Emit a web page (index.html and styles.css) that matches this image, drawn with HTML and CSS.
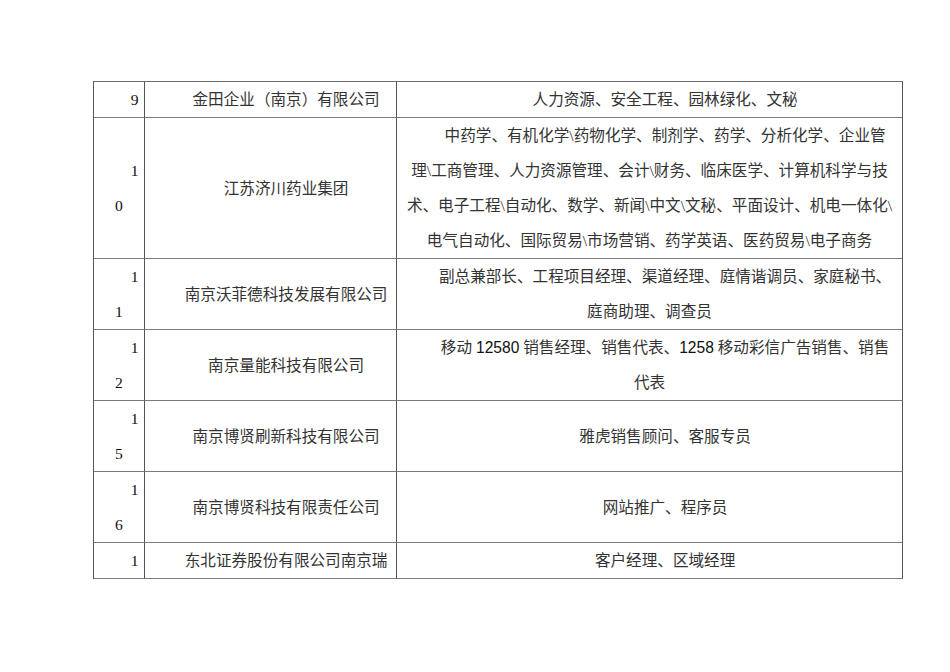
FILE: index.html
```html
<!DOCTYPE html>
<html lang="zh-CN">
<head>
<meta charset="utf-8">
<title>招聘单位</title>
<link rel="stylesheet" href="styles.css">
</head>
<body>
<table class="sheet">
  <colgroup>
    <col class="c-no">
    <col class="c-co">
    <col class="c-job">
  </colgroup>
  <tr class="r1">
    <td class="no"><div class="ln first">9</div></td>
    <td><div class="ln first">金田企业（南京）有限公司</div></td>
    <td><div class="ln first">人力资源、安全工程、园林绿化、文秘</div></td>
  </tr>
  <tr class="r4">
    <td class="no"><div class="ln first">1</div><div class="ln">0</div></td>
    <td><div class="ln first">江苏济川药业集团</div></td>
    <td>
      <div class="ln first">中药学、有机化学\药物化学、制剂学、药学、分析化学、企业管</div>
      <div class="ln">理\工商管理、人力资源管理、会计\财务、临床医学、计算机科学与技</div>
      <div class="ln">术、电子工程\自动化、数学、新闻\中文\文秘、平面设计、机电一体化\</div>
      <div class="ln">电气自动化、国际贸易\市场营销、药学英语、医药贸易\电子商务</div>
    </td>
  </tr>
  <tr class="r2">
    <td class="no"><div class="ln first">1</div><div class="ln">1</div></td>
    <td><div class="ln first">南京沃菲德科技发展有限公司</div></td>
    <td>
      <div class="ln first">副总兼部长、工程项目经理、渠道经理、庭情谐调员、家庭秘书、</div>
      <div class="ln">庭商助理、调查员</div>
    </td>
  </tr>
  <tr class="r2">
    <td class="no"><div class="ln first">1</div><div class="ln">2</div></td>
    <td><div class="ln first">南京量能科技有限公司</div></td>
    <td>
      <div class="ln first">移动 <span class="sans">12580</span> 销售经理、销售代表、<span class="sans">1258</span> 移动彩信广告销售、销售</div>
      <div class="ln">代表</div>
    </td>
  </tr>
  <tr class="r2">
    <td class="no"><div class="ln first">1</div><div class="ln">5</div></td>
    <td><div class="ln first">南京博贤刷新科技有限公司</div></td>
    <td><div class="ln first">雅虎销售顾问、客服专员</div></td>
  </tr>
  <tr class="r2">
    <td class="no"><div class="ln first">1</div><div class="ln">6</div></td>
    <td><div class="ln first">南京博贤科技有限责任公司</div></td>
    <td><div class="ln first">网站推广、程序员</div></td>
  </tr>
  <tr class="r1">
    <td class="no"><div class="ln first">1</div></td>
    <td><div class="ln first">东北证券股份有限公司南京瑞</div></td>
    <td><div class="ln first">客户经理、区域经理</div></td>
  </tr>
</table>
</body>
</html>
```

FILE: styles.css
```css
html, body {
  margin: 0;
  padding: 0;
  background: #ffffff;
}

body {
  font-family: "Liberation Serif", "Noto Sans CJK SC", serif;
  font-size: 15.6px;
  color: #333333;
}

.sheet {
  margin: 81px 0 0 93px;
  border-collapse: separate;
  border-spacing: 0;
  table-layout: fixed;
  width: 809px;
  border-top: 1px solid #6e6e6e;
  border-left: 1px solid #555555;
}

.c-no { width: 51px; }
.c-co { width: 252px; }
.c-job { width: 506px; }

.sheet td {
  padding: 0;
  border-right: 1px solid #555555;
  border-bottom: 1px solid #7a7a7a;
  vertical-align: middle;
  text-align: center;
  overflow: visible;
}

.r1 td { height: 35px; }
.r2 td { height: 70px; }
.r4 td { height: 140px; }

.ln {
  line-height: 35px;
  height: 35px;
  white-space: nowrap;
  text-align: center;
}

.ln.first {
  text-indent: 2em;
}

.no .ln {
  color: #111111;
}

.sans {
  font-family: "Liberation Sans", "Noto Sans CJK SC", sans-serif;
  color: #111111;
}
```
